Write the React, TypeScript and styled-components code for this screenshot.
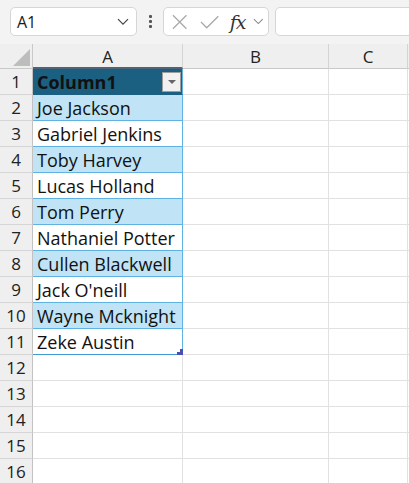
import React from 'react';
import styled, { createGlobalStyle } from 'styled-components';

const GlobalStyle = createGlobalStyle`
  html, body {
    margin: 0;
    padding: 0;
    background: #ffffff;
    overflow: hidden;
  }
  body {
    font-family: "Open Sans", "Noto Sans", sans-serif;
  }
`;

const names = [
  'Joe Jackson',
  'Gabriel Jenkins',
  'Toby Harvey',
  'Lucas Holland',
  'Tom Perry',
  'Nathaniel Potter',
  'Cullen Blackwell',
  "Jack O'neill",
  'Wayne Mcknight',
  'Zeke Austin',
];

const Page = styled.div`
  width: 409px;
  height: 483px;
  overflow: hidden;
  display: flex;
  flex-direction: column;
`;

const Toolbar = styled.div`
  height: 44px;
  box-sizing: border-box;
  background: #f3f3f3;
  padding: 7px 0 8px 10px;
  display: flex;
  align-items: stretch;
  flex-shrink: 0;
`;

const NameBox = styled.div`
  width: 127px;
  box-sizing: border-box;
  background: #fff;
  border: 1px solid #d6d6d6;
  border-radius: 5px;
  display: flex;
  align-items: center;
  justify-content: space-between;
  padding: 0 7px 0 6px;
  font-size: 16px;
  color: #1a1a1a;
`;

const Dots = styled.div`
  width: 26px;
  display: flex;
  flex-direction: column;
  align-items: center;
  justify-content: center;
  gap: 2px;
  span {
    width: 3px;
    height: 3px;
    background: #555;
    border-radius: 1px;
  }
`;

const FormulaButtons = styled.div`
  width: 106px;
  box-sizing: border-box;
  background: #fff;
  border: 1px solid #d6d6d6;
  border-radius: 5px;
  display: flex;
  align-items: center;
  padding: 0 4px 0 8px;
  gap: 8px;
`;

const Fx = styled.span`
  font-family: "DejaVu Serif", "Liberation Serif", serif;
  font-style: italic;
  font-size: 19px;
  color: #333;
  margin-left: 2px;
  letter-spacing: -1px;
`;

const FormulaInput = styled.div`
  flex: 1;
  margin-left: 6px;
  margin-right: -10px;
  background: #fff;
  border: 1px solid #d6d6d6;
  border-radius: 5px;
`;

const Sheet = styled.div`
  display: grid;
  grid-template-columns: 33px 150px 146px 79px 20px;
  grid-auto-rows: 26px;
  grid-template-rows: 25px;
  font-family: "Open Sans", "Noto Sans", sans-serif;
`;

const Corner = styled.div`
  background: #efefef;
  border-right: 1px solid #c9c9c9;
  border-bottom: 1px solid #c9c9c9;
  box-sizing: border-box;
  position: relative;
  &::after {
    content: '';
    position: absolute;
    right: 2px;
    bottom: 2px;
    width: 0;
    height: 0;
    border-left: 17px solid transparent;
    border-bottom: 17px solid #bdbdbd;
  }
`;

const ColHead = styled.div<{ $active?: boolean }>`
  background: #efefef;
  box-sizing: border-box;
  border-right: 1px solid #d4d4d4;
  border-bottom: ${(p) => (p.$active ? '2px solid #4d6478' : '1px solid #c9c9c9')};
  display: flex;
  align-items: center;
  justify-content: center;
  font-size: 17px;
  color: #222;
  padding-top: ${(p) => (p.$active ? '1px' : '0')};
`;

const RowHead = styled.div`
  background: #efefef;
  box-sizing: border-box;
  border-right: 1px solid #c2c2c2;
  border-bottom: 1px solid #d6d6d6;
  display: flex;
  align-items: center;
  justify-content: center;
  font-size: 17px;
  color: #222;
`;

const Cell = styled.div`
  box-sizing: border-box;
  border-right: 1px solid #e1e1e1;
  border-bottom: 1px solid #e1e1e1;
`;

const TableCell = styled.div<{ $band: 'head' | 'blue' | 'white'; $last?: boolean }>`
  box-sizing: border-box;
  position: relative;
  display: flex;
  align-items: center;
  padding-left: 4px;
  font-size: 18px;
  white-space: nowrap;
  color: #111;
  background: ${(p) =>
    p.$band === 'head' ? '#1b5f81' : p.$band === 'blue' ? '#c0e4f5' : '#ffffff'};
  font-weight: ${(p) => (p.$band === 'head' ? 700 : 400)};
  border-right: 1px solid #5fb3e3;
  border-bottom: 1px solid ${(p) => (p.$band === 'head' ? '#1b5f81' : '#5fb3e3')};
  ${(p) => (p.$last ? 'border-bottom: 1px solid #3f9ad6;' : '')}
`;

const FilterButton = styled.div`
  position: absolute;
  right: 1px;
  top: 3px;
  width: 19px;
  height: 20px;
  box-sizing: border-box;
  background: #f1f1f1;
  border: 1px solid #9d9d9d;
  display: flex;
  align-items: center;
  justify-content: center;
  &::after {
    content: '';
    width: 0;
    height: 0;
    border-left: 4px solid transparent;
    border-right: 4px solid transparent;
    border-top: 4px solid #666;
  }
`;

const ResizeHandle = styled.div`
  position: absolute;
  right: -1px;
  bottom: -1px;
  width: 6px;
  height: 6px;
  background: #4b4fb3;
  clip-path: polygon(100% 0, 100% 100%, 0 100%, 0 50%, 50% 50%, 50% 0);
`;

const Chevron = ({ size = 12, color = '#444' }: { size?: number; color?: string }) => (
  <svg width={size} height={size * 0.6} viewBox="0 0 12 7" fill="none">
    <path d="M1 1l5 5 5-5" stroke={color} strokeWidth="1.2" />
  </svg>
);

export default function App() {
  const rows = 16;
  return (
    <>
      <GlobalStyle />
      <Page>
        <Toolbar>
          <NameBox>
            <span>A1</span>
            <Chevron />
          </NameBox>
          <Dots>
            <span />
            <span />
            <span />
          </Dots>
          <FormulaButtons>
            <svg width="16" height="16" viewBox="0 0 16 16">
              <path d="M1 1l14 14M15 1L1 15" stroke="#a8a8a8" strokeWidth="1.3" />
            </svg>
            <svg width="20" height="16" viewBox="0 0 20 16" style={{ marginLeft: 5 }}>
              <path d="M1 8l6 6L19 2" stroke="#a8a8a8" strokeWidth="1.3" fill="none" />
            </svg>
            <Fx>fx</Fx>
            <Chevron size={11} color="#888" />
          </FormulaButtons>
          <FormulaInput />
        </Toolbar>
        <Sheet>
          <Corner />
          <ColHead $active>A</ColHead>
          <ColHead>B</ColHead>
          <ColHead>C</ColHead>
          <ColHead />
          {Array.from({ length: rows }, (_, i) => {
            const r = i + 1;
            let a: React.ReactNode;
            if (r === 1) {
              a = (
                <TableCell $band="head">
                  Column1
                  <FilterButton />
                </TableCell>
              );
            } else if (r <= 11) {
              a = (
                <TableCell $band={r % 2 === 0 ? 'blue' : 'white'} $last={r === 11}>
                  {names[r - 2]}
                  {r === 11 && <ResizeHandle />}
                </TableCell>
              );
            } else {
              a = <Cell />;
            }
            return (
              <React.Fragment key={r}>
                <RowHead>{r}</RowHead>
                {a}
                <Cell />
                <Cell />
                <Cell />
              </React.Fragment>
            );
          })}
        </Sheet>
      </Page>
    </>
  );
}
